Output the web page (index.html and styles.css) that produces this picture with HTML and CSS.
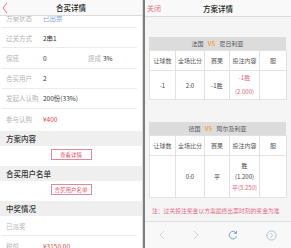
FILE: index.html
```html
<!DOCTYPE html>
<html lang="zh-CN">
<head>
    <meta charset="UTF-8">
    <meta name="viewport" content="width=device-width, initial-scale=1.0">
    <title>合买详情</title>
    <link rel="stylesheet" href="styles.css">
</head>
<body>
    <div class="screen">
        <div class="pane left">
            <div class="topbar">
                <span class="side">
                    <svg class="back" width="6" height="12" viewBox="0 0 6 12"><polyline points="5,1 1,6 5,11" fill="none" stroke="#e07a90" stroke-width="1"/></svg>
                </span>
                <span class="title">合买详情</span>
                <span class="side"></span>
            </div>
            <div class="scroll">
                <div class="list">
                    <div class="row"><span class="label">方案状态</span><span class="value blue">已出票</span></div>
                    <div class="row"><span class="label">过关方式</span><span class="value">2串1</span></div>
                    <div class="row"><span class="label">保底</span><span class="value half">0</span><span class="label short">提成</span><span class="value">3%</span></div>
                    <div class="row"><span class="label">合买用户</span><span class="value">2</span></div>
                    <div class="row"><span class="label">发起人认购</span><span class="value">200份(33%)</span></div>
                    <div class="row last"><span class="label">参与认购</span><span class="value red">¥400</span></div>
                </div>
                <div class="band">方案内容</div>
                <div class="btn-box"><span class="btn">查看详情</span></div>
                <div class="band">合买用户名单</div>
                <div class="btn-box"><span class="btn">合买用户名单</span></div>
                <div class="band">中奖情况</div>
                <div class="row"><span class="label">已派奖</span></div>
                <div class="row last"><span class="label">税前</span><span class="value red">¥3150.00</span></div>
            </div>
        </div>
        <div class="divider"></div>
        <div class="pane right">
            <div class="topbar">
                <span class="side close">关闭</span>
                <span class="title">方案详情</span>
                <span class="side"></span>
            </div>
            <div class="content">
                <div class="match">
                    <div class="match-bar">法国 <b class="vs">VS</b> 尼日利亚</div>
                    <table class="grid">
                        <colgroup><col class="c1"><col class="c2"><col class="c3"><col class="c4"><col class="c5"></colgroup>
                        <tr class="head"><td>让球数</td><td>全场比分</td><td>赛果</td><td>投注内容</td><td>胆</td></tr>
                        <tr class="data one">
                            <td>-1</td><td>2:0</td><td>-1胜</td>
                            <td><div class="pick pink">-1胜</div><div class="pick pink">(2.000)</div></td>
                            <td></td>
                        </tr>
                    </table>
                </div>
                <div class="match">
                    <div class="match-bar">德国 <b class="vs">VS</b> 阿尔及利亚</div>
                    <table class="grid">
                        <colgroup><col class="c1"><col class="c2"><col class="c3"><col class="c4"><col class="c5"></colgroup>
                        <tr class="head"><td>让球数</td><td>全场比分</td><td>赛果</td><td>投注内容</td><td>胆</td></tr>
                        <tr class="data two">
                            <td></td><td>0:0</td><td>平</td>
                            <td><div class="pick">胜</div><div class="pick">(1.200)</div><div class="pick pink">平(5.250)</div></td>
                            <td></td>
                        </tr>
                    </table>
                </div>
                <p class="note">注：过关投注奖金以方案最终出票时刻的奖金为准</p>
            </div>
            <div class="toolbar">
                <svg width="6" height="10" viewBox="0 0 6 10"><polyline points="5,1 1,5 5,9" fill="none" stroke="#d4d4d4" stroke-width="1"/></svg>
                <svg width="6" height="10" viewBox="0 0 6 10"><polyline points="1,1 5,5 1,9" fill="none" stroke="#d4d4d4" stroke-width="1"/></svg>
                <svg width="10" height="10" viewBox="0 0 10 10"><path d="M8.3 3.2 A3.8 3.8 0 1 0 8.6 6.4" fill="none" stroke="#6a93d0" stroke-width="0.9"/><polyline points="8.6,0.9 8.4,3.4 5.9,3.2" fill="none" stroke="#6a93d0" stroke-width="0.9"/></svg>
                <svg width="11" height="11" viewBox="0 0 11 11"><circle cx="5.5" cy="5.5" r="4.6" fill="none" stroke="#a9bad4" stroke-width="0.9"/><polyline points="4.5,3.2 6.7,5.5 4.5,7.8" fill="none" stroke="#a9bad4" stroke-width="0.9"/></svg>
            </div>
        </div>
    </div>
</body>
</html>
```

FILE: styles.css
```css
* {
    margin: 0;
    padding: 0;
    box-sizing: border-box;
    font-family: "Noto Sans CJK SC", "Noto Sans", sans-serif;
}

body {
    background: #fff;
}

.screen {
    display: flex;
    width: 291px;
    height: 248px;
    overflow: hidden;
}

.pane {
    display: flex;
    flex-direction: column;
    height: 248px;
    overflow: hidden;
}

.left {
    width: 142px;
    background: #fff;
}

.divider {
    width: 3px;
    background: linear-gradient(to right, #dedede 1px, #7d7d7d 1px);
}

.right {
    width: 146px;
    background: #f5f5f5;
}

/* top bars */
.topbar {
    display: flex;
    align-items: center;
    height: 16px;
    flex-shrink: 0;
    background: #f9f9f9;
    border-bottom: 1px solid #dcdcdc;
    position: relative;
    z-index: 1;
}

.right .topbar {
    height: 17px;
}

.topbar .side {
    width: 22px;
    display: flex;
    align-items: center;
    padding-left: 2px;
}

.topbar .title {
    flex: 1;
    text-align: center;
    font-size: 7.5px;
    font-weight: 500;
    color: #222;
}

.close {
    font-size: 7px;
    color: #e0688a;
}

/* left list */
.scroll {
    flex: 1;
    overflow: hidden;
}

.list {
    margin-top: -8px;
}

.row {
    display: flex;
    align-items: center;
    height: 20.2px;
    margin: 0 5px 0 2px;
    padding-left: 4px;
    border-bottom: 1px solid #ececec;
    font-size: 6.5px;
}

.row.last {
    border-bottom: 0;
}

.label {
    width: 37px;
    color: #b4b4b4;
}

.label.short {
    width: 15px;
}

.value {
    color: #333;
}

.value.half {
    width: 45px;
}

.blue {
    color: #7aa4dc;
}

.red {
    color: #e6493d;
}

.band {
    margin-top: 2px;
    height: 15px;
    line-height: 15px;
    padding-left: 6px;
    background: #efefef;
    font-size: 7.5px;
    font-weight: 500;
    color: #333;
}

.btn-box {
    display: flex;
    justify-content: center;
    padding: 3px 0 4px;
}

.btn {
    display: flex;
    align-items: center;
    justify-content: center;
    width: 41px;
    height: 11px;
    border: 1px solid #e0899a;
    font-size: 5.5px;
    color: #d94f68;
    background: #fff;
}

/* right content */
.content {
    flex: 1;
    padding: 20px 5px 0 4px;
}

.match {
    margin-bottom: 22px;
}

.match-bar {
    height: 13px;
    line-height: 13px;
    text-align: center;
    background: #dcdcdc;
    font-size: 6px;
    color: #555;
}

.vs {
    color: #f3a43a;
    font-weight: 700;
    margin: 0 3px;
}

.grid {
    width: 137px;
    table-layout: fixed;
    border-collapse: collapse;
    background: #fff;
}

.c1 { width: 26px; }
.c2 { width: 29px; }
.c3 { width: 25px; }
.c4 { width: 30px; }
.c5 { width: 27px; }

.grid td {
    border: 1px solid #e2e2e2;
    text-align: center;
    font-size: 6px;
    color: #444;
    padding: 0;
}

.grid .head td {
    height: 20px;
    color: #555;
}

.grid .one td {
    height: 27px;
}

.grid .two td {
    height: 42px;
}

.one .pick {
    line-height: 14px;
}

.two .pick {
    line-height: 11px;
}

.pink {
    color: #e2637f;
}

.note {
    margin-top: -14px;
    padding-left: 3px;
    font-size: 5.8px;
    color: #e46a86;
    white-space: nowrap;
}

/* bottom toolbar */
.toolbar {
    height: 27px;
    flex-shrink: 0;
    display: flex;
    align-items: center;
    justify-content: space-around;
    background: #f8f8f8;
    border-top: 1px solid #e0e0e0;
}
```
